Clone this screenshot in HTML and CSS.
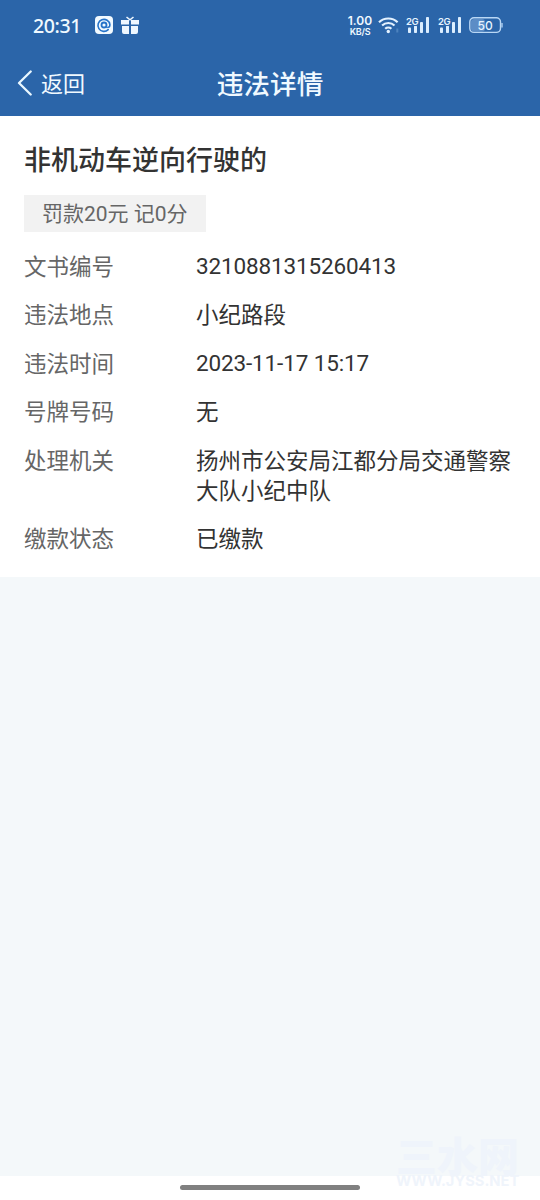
FILE: index.html
```html
<!DOCTYPE html>
<html lang="zh-CN">
<head>
<meta charset="utf-8">
<title>违法详情</title>
<link rel="stylesheet" href="styles.css">
</head>
<body>
<div class="screen">
  <header class="top">
    <div class="status">
      <span class="clock">20:31</span>
      <svg class="app" width="18" height="18" viewBox="0 0 18 18"><rect width="18" height="18" rx="4" fill="#f2faff"/><path d="M13.2 13.6A6 6 0 1 1 14.9 8.6c0 1.8-.6 2.7-1.6 2.7" fill="none" stroke="#2673c9" stroke-width="1.6" stroke-linecap="round"/><circle cx="9" cy="9" r="2.5" fill="none" stroke="#2673c9" stroke-width="1.8"/><path d="M11 10.5l1.6 1.3" stroke="#2673c9" stroke-width="1.6"/></svg>
      <svg class="gift" width="18" height="19" viewBox="0 0 18 19" fill="#eef7ff"><path d="M0 4h8v4.5H0zM10 4h8v4.5h-8zM1 10h7v8H3a2 2 0 0 1-2-2zM10 10h7v6a2 2 0 0 1-2 2h-5z"/><path d="M5.5 1 9 3.8 12.500 1" fill="none" stroke="#eef7ff" stroke-width="1.6"/></svg>
      <span class="speed"><b>1.00</b><i>KB/S</i></span>
      <svg class="wifi" width="22" height="18" viewBox="0 0 22 18" fill="none" stroke="#e4f2ff" stroke-width="2.2"><path d="M1 6.2a13.5 13.5 0 0 1 18.6 0M4.1 9.5a9 9 0 0 1 12.4 0M7.2 12.7a4.6 4.6 0 0 1 6.2 0"/><circle cx="10.3" cy="15.5" r="1.7" fill="#e4f2ff" stroke="none"/><path d="M19.3 12.5v4" stroke="#4d83be" stroke-width="2"/></svg>
      <svg class="signal" width="24" height="18" viewBox="0 0 24 18"><g fill="#dceeff"><rect x="2" y="11.5" width="3" height="5.5" rx=".8"/><rect x="8" y="9.5" width="3" height="7.5" rx=".8"/><rect x="14" y="6" width="3" height="11" rx=".8"/><rect x="20" y="1" width="3" height="16" rx=".8"/></g><text x="0" y="8.5">2G</text></svg>
      <svg class="signal second" width="24" height="18" viewBox="0 0 24 18"><g fill="#dceeff"><rect x="2" y="11.5" width="3" height="5.5" rx=".8"/><rect x="8" y="9.5" width="3" height="7.5" rx=".8"/><rect x="14" y="6" width="3" height="11" rx=".8"/><rect x="20" y="1" width="3" height="16" rx=".8"/></g><text x="0" y="8.5">2G</text></svg>
      <svg class="battery" width="34" height="17" viewBox="0 0 34 17"><rect x="2" y="2" width="14" height="12.5" rx="3" fill="#5c8dc6"/><rect x=".8" y=".8" width="30.7" height="14.6" rx="4.2" fill="none" stroke="#b9d7f5" stroke-width="1.4"/><path d="M33 6v4.5" stroke="#b9d7f5" stroke-width="1.3"/><text x="16.2" y="12.6" text-anchor="middle">50</text></svg>
    </div>
    <nav class="nav">
      <a class="back"><svg width="16" height="26" viewBox="0 0 16 26"><path d="M13.7 1.5 2 13l11.7 11.5" fill="none" stroke="#e9f7ff" stroke-width="2.3" stroke-linecap="round" stroke-linejoin="round"/></svg><span>返回</span></a>
      <h1>违法详情</h1>
    </nav>
  </header>
  <main class="detail">
    <h2>非机动车逆向行驶的</h2>
    <span class="tag">罚款20元 记0分</span>
    <dl class="rows">
      <dt>文书编号</dt><dd class="num">3210881315260413</dd>
      <dt>违法地点</dt><dd>小纪路段</dd>
      <dt>违法时间</dt><dd class="num">2023-11-17 15:17</dd>
      <dt>号牌号码</dt><dd>无</dd>
      <dt>处理机关</dt><dd>扬州市公安局江都分局交通警察大队小纪中队</dd>
      <dt>缴款状态</dt><dd>已缴款</dd>
    </dl>
  </main>
  <footer class="gesture"><div class="pill"></div></footer>
  <div class="mark"><span class="mark-name">三水网</span><span class="mark-url">WWW.JYSS.NET</span></div>
</div>
</body>
</html>
```
FILE: styles.css
```css
* { box-sizing: border-box; }
body { margin: 0; font-family: Roboto, "Noto Sans CJK SC", sans-serif; }
.screen { position: relative; width: 540px; height: 1200px; display: flex; flex-direction: column; background: #f4f8fa; overflow: hidden; }
.top { height: 116px; flex: none; background: #2b65a9; color: #f0f9ff; }
.status { display: flex; align-items: center; height: 50px; padding-left: 33px; }
.clock { width: 62px; padding-top: 1px; font: 500 19.5px/24px "Noto Sans", "Noto Sans CJK SC", sans-serif; letter-spacing: -0.4px; }
.gift { margin: 0 0 0 8px; }
.speed { display: flex; flex-direction: column; align-items: center; width: 26px; margin-left: 208px; }
.speed b { font: 600 12px/12px Inter, sans-serif; }
.speed i { font: normal 600 9px/9px Inter, sans-serif; letter-spacing: -0.2px; }
.wifi { margin: -1px 0 0 5px; }
.signal { margin-left: 6px; overflow: visible; }
.second { margin-left: 7.5px; }
.signal text { font: 600 9.5px Inter, sans-serif; letter-spacing: -0.5px; fill: #e7f4ff; stroke: #2b65a9; stroke-width: 2px; paint-order: stroke; }
.battery { margin-left: 7px; }
.battery text { font: 500 12px Inter, sans-serif; fill: #e7f4ff; }
.nav { display: grid; grid-template-columns: 1fr auto 1fr; align-items: center; height: 66px; }
.back { display: flex; align-items: center; gap: 8px; padding-left: 17px; font-size: 22px; line-height: 30px; }
.back span { padding-top: 3px; }
h1 { margin: 5px 0 0; font-size: 26.7px; line-height: 37px; font-weight: 500; }
.detail { flex: none; height: 461px; padding: 25px 24px 0; background: #fff; color: #333; }
h2 { margin: 0 0 14px; font-size: 27px; line-height: 40px; font-weight: 500; }
.tag { display: block; width: 182px; height: 37px; padding: 1px 0 0 18px; background: #f2f2f2; color: #666; font-size: 21px; line-height: 37px; white-space: nowrap; }
.rows { display: grid; grid-template-columns: 172px 1fr; row-gap: 19px; margin: 20.6px 0 0; font-size: 22.5px; line-height: 29.6px; font-weight: 400; }
.rows dt { color: #666; }
.rows dd { margin: 0; margin-right: -6px; }
.rows .num { margin-top: -0.6px; letter-spacing: -0.14px; }
.gesture { display: flex; justify-content: center; height: 24px; margin-top: auto; padding-top: 9px; background: #fff; }
.pill { width: 180px; height: 5px; border-radius: 3px; background: #808080; }
.mark { position: absolute; left: 396px; top: 1135px; display: flex; flex-direction: column; width: 126px; color: #eff4fb; }
.mark-name { font: 900 41px/38px "Noto Sans CJK SC", sans-serif; white-space: nowrap; }
.mark-url { font: 700 14.7px/16px Inter, sans-serif; white-space: nowrap; }
```
